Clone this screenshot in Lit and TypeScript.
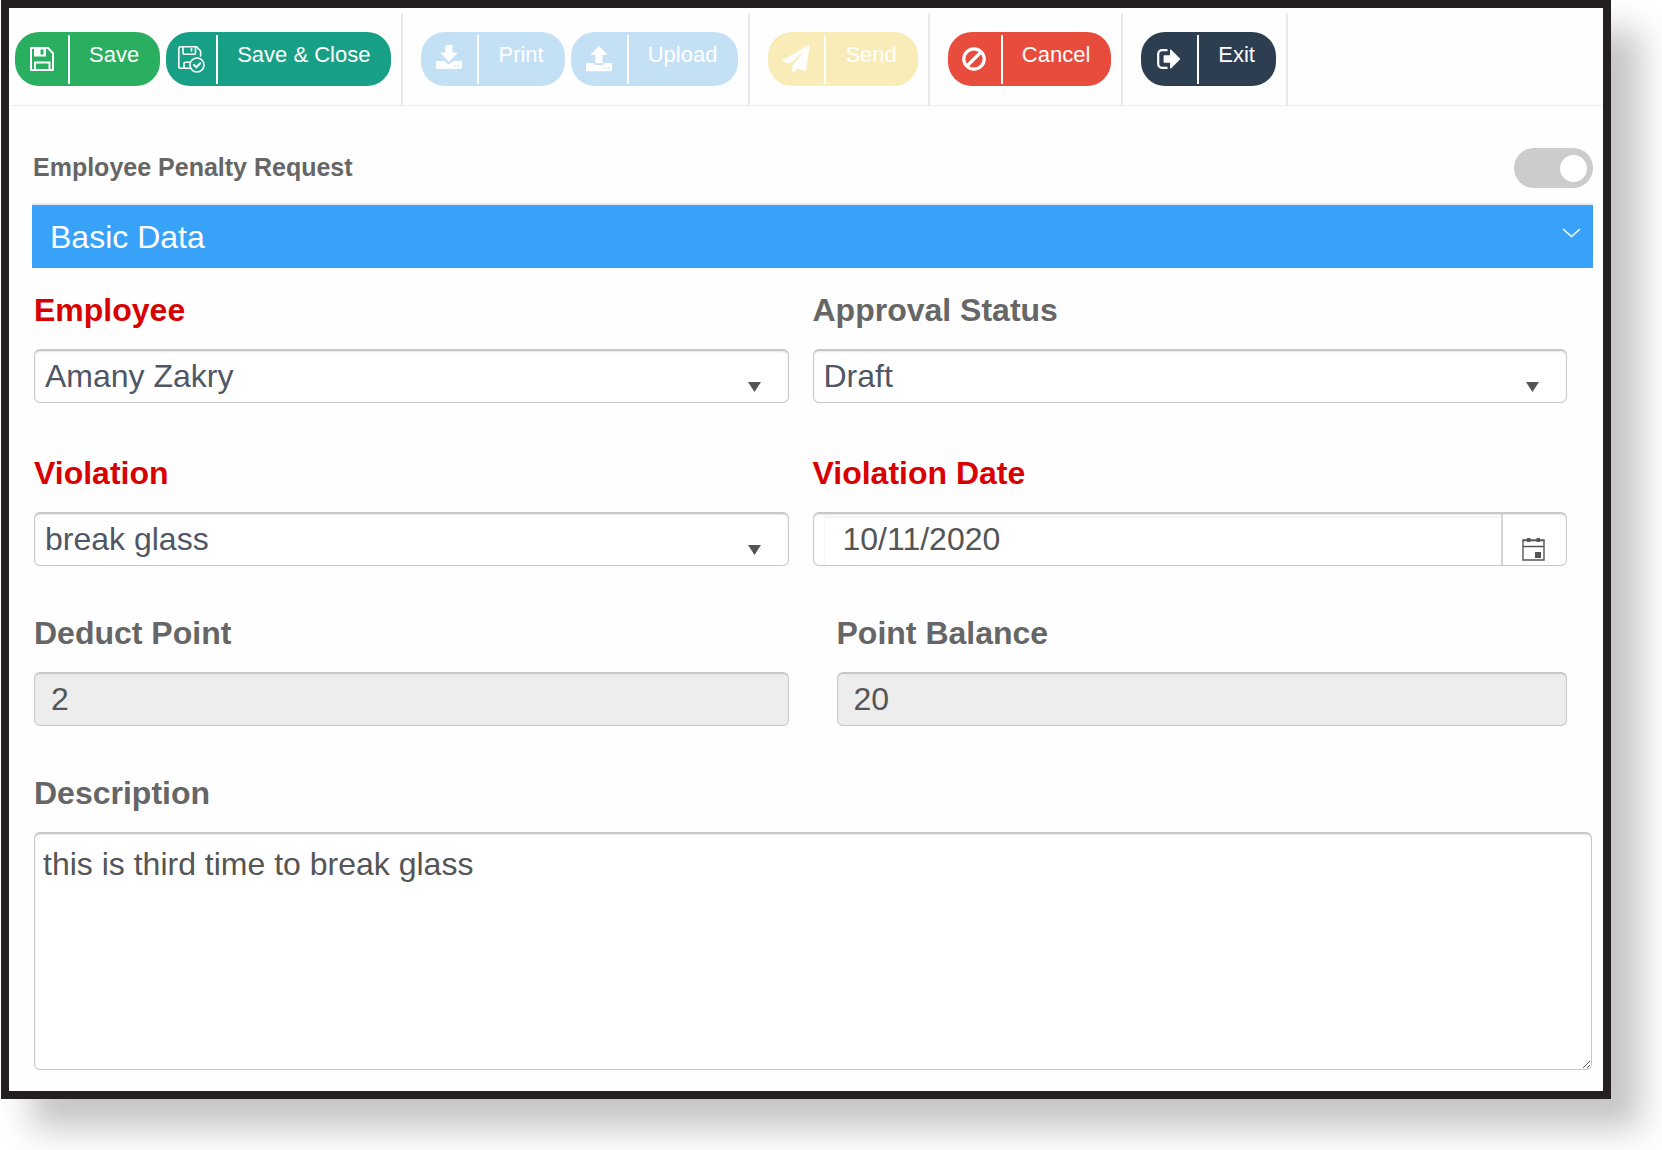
import { LitElement, html, css, svg } from "lit";
import { customElement, property, state } from "lit/decorators.js";

const icons: Record<string, unknown> = {
  save: svg`<svg width="24" height="24" viewBox="0 0 24 24" fill="none" stroke="#fff" stroke-width="2" aria-hidden="true">
    <path d="M1 1H18L23 6.200V23H1Z" stroke-linejoin="round"/>
    <path d="M5 23V15.500H19.500V23"/>
    <path d="M4 1H16V9.500H4Z M10.500 2.500V7.500H13.500V2.500Z" fill="#fff" fill-rule="evenodd" stroke="none"/>
  </svg>`,
  saveClose: svg`<svg width="27" height="27" viewBox="0 0 27 27" fill="none" stroke="#fff" stroke-width="1.600" stroke-linejoin="round" stroke-linecap="round" aria-hidden="true">
    <path d="M11.500 22.200H2.500A1.700 1.700 0 0 1 .8 20.500V2.500A1.700 1.700 0 0 1 2.500 .8H18.500L22.600 5V10"/>
    <path d="M5 1V7A1.200 1.200 0 0 0 6.200 8.200H16.300A1.200 1.200 0 0 0 17.500 7V1"/>
    <path d="M13.500 2.500V5"/>
    <path d="M6 22V17.500A1.200 1.200 0 0 1 7.200 16.300H11.500"/>
    <circle cx="19" cy="19" r="7"/>
    <path d="M16 19L18.300 21.200L22.200 17.200" stroke-width="2"/>
  </svg>`,
  download: svg`<svg width="26" height="24" viewBox="0 0 26 24" fill="#fff" aria-hidden="true">
    <path d="M10.200 0H15.800A.8 .8 0 0 1 16.600 .8V7.500H20.400A.7 .7 0 0 1 20.900 8.700L13.600 16.200A.9 .9 0 0 1 12.400 16.200L5.100 8.700A.7 .7 0 0 1 5.600 7.500H9.400V.8A.8 .8 0 0 1 10.200 0Z"/>
    <path fill-rule="evenodd" d="M1.200 16H8.500L11.300 18.400A2.600 2.600 0 0 0 14.700 18.400L17.500 16H24.800A1.200 1.200 0 0 1 26 17.200V22.800A1.200 1.200 0 0 1 24.800 24H1.200A1.200 1.200 0 0 1 0 22.800V17.200A1.200 1.200 0 0 1 1.200 16ZM18 20V21.500H19.600V20ZM21.500 20V21.500H23.100V20Z"/>
  </svg>`,
  upload: svg`<svg width="26" height="26" viewBox="0 0 26 26" fill="#fff" aria-hidden="true">
    <path d="M12.400 .4A.9 .9 0 0 1 13.600 .4L20.900 7.900A.7 .7 0 0 1 20.400 9.100H16.600V16.500A.8 .8 0 0 1 15.800 17.300H10.200A.8 .8 0 0 1 9.400 16.500V9.100H5.600A.7 .7 0 0 1 5.100 7.900Z"/>
    <path fill-rule="evenodd" d="M1.200 17H8A2 2 0 0 0 10 18.900H16A2 2 0 0 0 18 17H24.800A1.200 1.200 0 0 1 26 18.200V24A1.200 1.200 0 0 1 24.800 25.200H1.200A1.200 1.200 0 0 1 0 24V18.200A1.200 1.200 0 0 1 1.200 17ZM18 21.200V22.700H19.600V21.200ZM21.500 21.200V22.700H23.100V21.200Z"/>
  </svg>`,
  send: svg`<svg width="28" height="28" viewBox="0 0 26 27" fill="#fff" aria-hidden="true">
    <path d="M25 .2L.4 14.500A.7 .7 0 0 0 .5 15.700L6.500 18L22 4.800L9.500 19.800V26A.8 .8 0 0 0 10.900 26.500L14 22.500L21.500 25A.9 .9 0 0 0 22.700 24.200L26 1A.8 .8 0 0 0 25 .2Z"/>
  </svg>`,
  cancel: svg`<svg width="24" height="24" viewBox="0 0 24 24" fill="none" stroke="#fff" stroke-width="3.200" aria-hidden="true">
    <circle cx="12" cy="12" r="10.200"/>
    <path d="M5.500 18.500L18.500 5.500"/>
  </svg>`,
  exit: svg`<svg width="24" height="20" viewBox="0 0 24 20" aria-hidden="true">
    <path d="M10.500 1.200H5A3.800 3.800 0 0 0 1.200 5V15A3.800 3.800 0 0 0 5 18.800H10.500" fill="none" stroke="#fff" stroke-width="2.200"/>
    <path d="M7.500 6.200H13V1.200A.7 .7 0 0 1 14.200 .7L23 9.400A.8 .8 0 0 1 23 10.600L14.200 19.300A.7 .7 0 0 1 13 18.800V13.800H7.500A.9 .9 0 0 1 6.600 12.900V7.100A.9 .9 0 0 1 7.500 6.200Z" fill="#fff"/>
  </svg>`,
};

interface Action {
  label: string;
  icon: string;
  tone: string;
  disabled?: boolean;
}

const groups: Action[][] = [
  [
    { label: "Save", icon: "save", tone: "green" },
    { label: "Save & Close", icon: "saveClose", tone: "teal" },
  ],
  [
    { label: "Print", icon: "download", tone: "blue", disabled: true },
    { label: "Upload", icon: "upload", tone: "blue", disabled: true },
  ],
  [{ label: "Send", icon: "send", tone: "yellow", disabled: true }],
  [{ label: "Cancel", icon: "cancel", tone: "red" }],
  [{ label: "Exit", icon: "exit", tone: "navy" }],
];

@customElement("action-button")
class ActionButton extends LitElement {
  @property({ attribute: false }) action!: Action;

  static styles = css`
    :host {
      display: block;
    }
    .button {
      display: flex;
      align-items: center;
      height: 54px;
      padding: 0;
      border: 0;
      border-radius: 24px;
      color: #fff;
      font: 22px/26px "Liberation Sans", Arial, sans-serif;
      white-space: nowrap;
      cursor: pointer;
    }
    .button:disabled {
      cursor: default;
    }
    .icon {
      display: flex;
      justify-content: center;
      width: 56px;
    }
    .icon.save,
    .icon.cancel {
      width: 53px;
    }
    .icon.saveClose {
      width: 50px;
    }
    .icon.download {
      padding-bottom: 4px;
    }
    .icon svg {
      display: block;
    }
    .text {
      display: block;
      height: 49px;
      padding: 7px 21px 16px 19px;
      border-left: 2px solid #fff;
      box-sizing: border-box;
    }
    .green { background: #2aae60; }
    .teal { background: #18a086; }
    .blue { background: #c4e0f5; }
    .yellow { background: #faecb8; }
    .red { background: #e84c3d; }
    .navy { background: #2d3e50; }
  `;

  render() {
    const a = this.action;
    return html`<button type="button" class="button ${a.tone}" ?disabled=${a.disabled}>
      <span class="icon ${a.icon}">${icons[a.icon]}</span>
      <span class="text">${a.label}</span>
    </button>`;
  }
}

@customElement("app-root")
class AppRoot extends LitElement {
  @state() private open = true;

  static styles = css`
    :host {
      display: block;
      box-sizing: border-box;
      padding: 0 51px 51px 1px;
      background: #fff;
      overflow: hidden;
      font: 32px/36px "Liberation Sans", Arial, sans-serif;
      color: #555;
    }
    .frame {
      border: 8px solid #231f20;
      background: #fefefe;
      box-shadow: 30px 30px 32px #c6c6c6;
    }
    .toolbar {
      display: flex;
      margin-left: 3px;
      padding-top: 5px;
      border-bottom: 1px solid #eeeef2;
    }
    .group {
      display: flex;
      gap: 6px;
      padding: 19px 10px 19px 18px;
      border-right: 2px solid #e8e8f0;
    }
    .group:first-child {
      padding-left: 3px;
    }
    .content {
      padding: 0 10px 21px 23px;
    }
    .heading {
      display: flex;
      align-items: center;
      justify-content: space-between;
      padding: 42px 0 15px;
    }
    .title {
      margin: 0;
      padding: 0 0 2px 1px;
      font-size: 25px;
      line-height: 30px;
      color: #666;
    }
    .toggle {
      appearance: none;
      display: flex;
      align-items: center;
      box-sizing: border-box;
      width: 79px;
      height: 40px;
      margin: 0;
      padding: 0 6px;
      border-radius: 20px;
      background: #ccc;
      cursor: pointer;
    }
    .toggle::before {
      content: "";
      width: 27px;
      height: 27px;
      border-radius: 50%;
      background: #fff;
    }
    .toggle:checked {
      justify-content: flex-end;
    }
    .banner {
      display: flex;
      justify-content: space-between;
      width: 100%;
      padding: 14px 12px 13px 18px;
      border: 0;
      border-top: 2px solid #e8ecf2;
      background: #38a2f8;
      color: #fff;
      font: inherit;
      text-align: left;
      cursor: pointer;
    }
    .chevron {
      margin-top: 8px;
    }
    .fields {
      padding: 24px 1px 0 2px;
      display: grid;
      gap: 49px;
    }
    .fields[hidden] {
      display: none;
    }
    .grid {
      display: grid;
      grid-template-columns: 1fr 1fr;
      gap: 52px 24px;
      padding-right: 25px;
    }
    .field {
      display: grid;
      gap: 21px;
      min-width: 0;
    }
    .indent {
      padding-left: 24px;
    }
    .label {
      font-weight: bold;
      color: #666;
    }
    .required {
      color: #d90000;
    }
    .box {
      box-sizing: border-box;
      width: 100%;
      height: 54px;
      margin: 0;
      border: 1px solid #c8c8c8;
      border-top-width: 2px;
      border-radius: 6px;
      background-color: #fff;
      box-shadow: inset 0 1px 2px #e6e6e6;
      color: #555;
      font: inherit;
      outline: none;
    }
    .picker {
      display: grid;
      align-items: center;
    }
    .picker > * {
      grid-area: 1 / 1;
    }
    .select {
      appearance: none;
      padding: 0 50px 2px 10px;
      color: #4f5666;
    }
    .arrow {
      justify-self: end;
      margin: 21px 28px 0 0;
      pointer-events: none;
    }
    .readonly {
      padding: 0 16px;
      background-color: #ededed;
    }
    .date {
      display: flex;
      padding-left: 10px;
      overflow: hidden;
    }
    .date-input {
      flex: 1;
      min-width: 0;
      box-sizing: border-box;
      height: 49px;
      margin: 2px 0 0;
      padding: 0 18px 4px;
      border: 0;
      border-top: 2px solid #f4f4f4;
      border-left: 1px solid #f6f6f6;
      background: none;
      color: #555;
      font: inherit;
      outline: none;
    }
    .date-button {
      display: flex;
      align-items: center;
      width: 65px;
      padding: 20px 0 0 19px;
      border: 0;
      border-left: 2px solid #d4d4d4;
      background: none;
      cursor: pointer;
      box-sizing: border-box;
    }
    .description {
      display: block;
      height: 238px;
      padding: 12px 8px;
      resize: both;
    }
  `;

  private select(id: string, label: string, value: string, required: boolean) {
    return html`<div class="field">
      <label class="label ${required ? "required" : ""}" for=${id}>${label}</label>
      <div class="picker">
        <select class="box select" id=${id}><option>${value}</option></select>
        <svg class="arrow" width="13" height="10" viewBox="0 0 13 10" aria-hidden="true">
          <path d="M0 0H13L6.500 10Z" fill="#555" />
        </svg>
      </div>
    </div>`;
  }

  render() {
    return html`<main class="frame">
      <div class="toolbar">
        ${groups.map(
          (g) => html`<div class="group">
            ${g.map((a) => html`<action-button .action=${a}></action-button>`)}
          </div>`
        )}
      </div>
      <div class="content">
        <div class="heading">
          <h1 class="title" id="title">Employee Penalty Request</h1>
          <input class="toggle" type="checkbox" checked aria-labelledby="title" />
        </div>
        <button type="button" class="banner" aria-expanded=${this.open} @click=${() => (this.open = !this.open)}>
          <span>Basic Data</span>
          <svg class="chevron" width="19" height="12" viewBox="0 0 19 12" fill="none" stroke="#fff" stroke-width="1.600" aria-hidden="true">
            <path d="M1 2L9.500 9.500L18 2" />
          </svg>
        </button>
        <form class="fields" ?hidden=${!this.open}>
          <div class="grid">
            ${this.select("employee", "Employee", "Amany Zakry", true)}
            ${this.select("status", "Approval Status", "Draft", false)}
            ${this.select("violation", "Violation", "break glass", true)}
            <div class="field">
              <label class="label required" for="date">Violation Date</label>
              <div class="box date">
                <input class="date-input" id="date" type="text" value="10/11/2020" />
                <button type="button" class="date-button" aria-label="Open calendar">
                  <svg width="23" height="23" viewBox="0 0 23 23" fill="none" stroke="#555" aria-hidden="true">
                    <path d="M1 2V22H22V2" stroke-width="1.400" />
                    <path d="M.4 2.200H22.600" stroke-width="2" />
                    <path d="M1 8.500H22" stroke-width="1.400" />
                    <path d="M5 2H8.500M14.500 2H18" stroke-width="4" />
                    <path d="M13 14H19V20H13Z" fill="#555" stroke="none" />
                  </svg>
                </button>
              </div>
            </div>
          </div>
          <div class="grid">
            <div class="field">
              <label class="label" for="deduct">Deduct Point</label>
              <input class="box readonly" id="deduct" type="text" value="2" readonly />
            </div>
            <div class="field indent">
              <label class="label" for="balance">Point Balance</label>
              <input class="box readonly" id="balance" type="text" value="20" readonly />
            </div>
          </div>
          <div class="field">
            <label class="label" for="description">Description</label>
            <textarea class="box description" id="description" .value=${"this is third time to break glass"}></textarea>
          </div>
        </form>
      </div>
    </main>`;
  }
}
